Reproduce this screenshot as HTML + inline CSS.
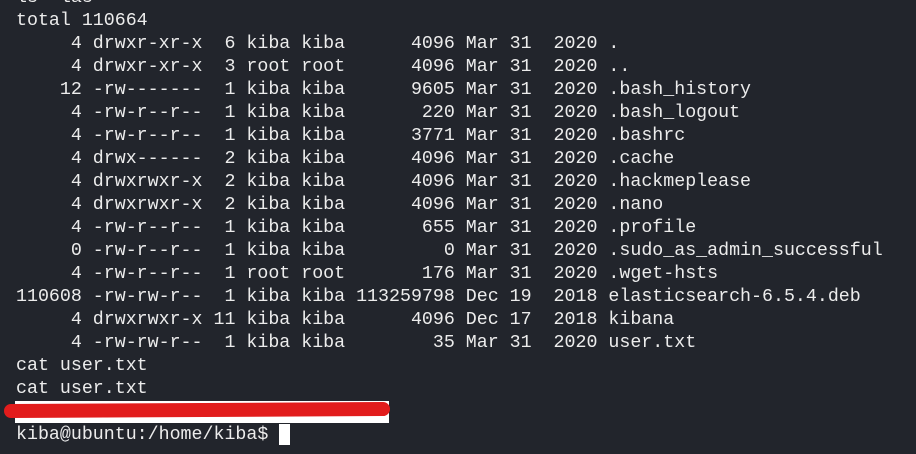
<!DOCTYPE html>
<html><head><style>
html,body{margin:0;padding:0;background:#22252c;width:916px;height:454px;overflow:hidden}
pre{position:absolute;left:16px;top:-13px;margin:0;font-family:"Liberation Mono","DejaVu Sans Mono",monospace;font-size:18.3px;line-height:23px;color:#ececec;letter-spacing:0}
.w{position:absolute;left:15px;top:401px;width:374px;height:22px;background:#fff}
.r{position:absolute;left:4px;top:403px;width:386px;height:14px;background:#e21c1c;border-radius:8px;transform:rotate(-0.3deg)}
.c{position:absolute;left:279px;top:424px;width:11px;height:21px;background:#fff}
</style></head><body>
<pre>ls -las
total 110664
     4 drwxr-xr-x  6 kiba kiba      4096 Mar 31  2020 .
     4 drwxr-xr-x  3 root root      4096 Mar 31  2020 ..
    12 -rw-------  1 kiba kiba      9605 Mar 31  2020 .bash_history
     4 -rw-r--r--  1 kiba kiba       220 Mar 31  2020 .bash_logout
     4 -rw-r--r--  1 kiba kiba      3771 Mar 31  2020 .bashrc
     4 drwx------  2 kiba kiba      4096 Mar 31  2020 .cache
     4 drwxrwxr-x  2 kiba kiba      4096 Mar 31  2020 .hackmeplease
     4 drwxrwxr-x  2 kiba kiba      4096 Mar 31  2020 .nano
     4 -rw-r--r--  1 kiba kiba       655 Mar 31  2020 .profile
     0 -rw-r--r--  1 kiba kiba         0 Mar 31  2020 .sudo_as_admin_successful
     4 -rw-r--r--  1 root root       176 Mar 31  2020 .wget-hsts
110608 -rw-rw-r--  1 kiba kiba 113259798 Dec 19  2018 elasticsearch-6.5.4.deb
     4 drwxrwxr-x 11 kiba kiba      4096 Dec 17  2018 kibana
     4 -rw-rw-r--  1 kiba kiba        35 Mar 31  2020 user.txt
cat user.txt
cat user.txt

kiba@ubuntu:/home/kiba$</pre>
<div class="w"></div><div class="r"></div><div class="c"></div>
</body></html>
